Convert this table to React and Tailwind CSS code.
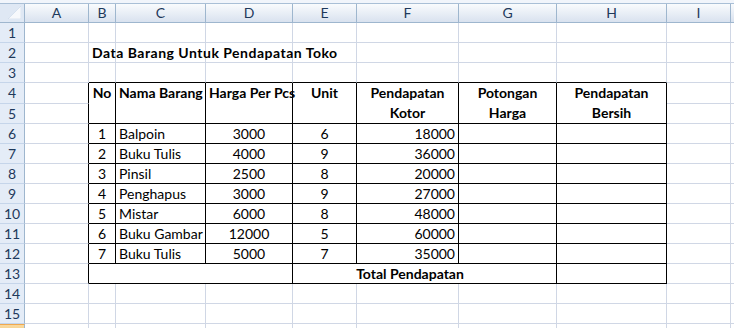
import React from 'react';

const COLS = [
    { k: 'A', w: 'w-[64px]' },
    { k: 'B', w: 'w-[27px]' },
    { k: 'C', w: 'w-[90px]' },
    { k: 'D', w: 'w-[87px]' },
    { k: 'E', w: 'w-[64px]' },
    { k: 'F', w: 'w-[102px]' },
    { k: 'G', w: 'w-[98px]' },
    { k: 'H', w: 'w-[110px]' },
    { k: 'I', w: 'w-[64px]' },
    { k: 'J', w: 'w-[80px]' },
];

const ITEMS = [
    [1, 'Balpoin', 3000, 6, 18000],
    [2, 'Buku Tulis', 4000, 9, 36000],
    [3, 'Pinsil', 2500, 8, 20000],
    [4, 'Penghapus', 3000, 9, 27000],
    [5, 'Mistar', 6000, 8, 48000],
    [6, 'Buku Gambar', 12000, 5, 60000],
    [7, 'Buku Tulis', 5000, 7, 35000],
];

// table block is B4:H13
const inTable = (r, c) => r >= 4 && r <= 13 && c >= 1 && c <= 7;

function Cell({ r, c, children, align = 'left', bold = false, colSpan, rowSpan, top = false, extra = '' }) {
    const blackR = inTable(r, c) || (c === 0 && r >= 4 && r <= 13);
    const blackB = inTable(r, c) || (r === 3 && c >= 1 && c <= 7);
    return (
        <td
            colSpan={colSpan}
            rowSpan={rowSpan}
            className={`border-r border-b p-0 px-[3px] whitespace-nowrap leading-[19px] ${
                blackR ? 'border-r-black' : 'border-r-[#d0d7e5]'
            } ${blackB ? 'border-b-black' : 'border-b-[#d0d7e5]'} ${
                align === 'center' ? 'text-center' : align === 'right' ? 'text-right' : 'text-left'
            } ${bold ? 'font-bold' : ''} ${top ? 'align-top' : 'align-middle'} ${extra}`}
        >
            {children}
        </td>
    );
}

function RowHead({ n, active }) {
    return (
        <td
            className={`border-r border-b p-0 text-center leading-[19px] text-[#1e395b] ${
                active
                    ? 'bg-gradient-to-b from-[#f9d99f] to-[#f1c15f] border-r-[#9eb6ce] border-b-[#9eb6ce] border-t border-t-[#f0a94f]'
                    : 'bg-[#e4ecf7] border-r-[#9eb6ce] border-b-[#c5d5ea]'
            }`}
        >
            {active ? null : n}
        </td>
    );
}

function EmptyRow({ r }) {
    return (
        <tr className="h-[20px]">
            <RowHead n={r} active={r === 16} />
            {COLS.map((col, c) => (
                <Cell key={col.k} r={r} c={c} />
            ))}
        </tr>
    );
}

export default function App() {
    return (
        <div className="w-[734px] h-[328px] overflow-hidden bg-white text-[14px] text-black font-['Lato','Liberation_Sans',sans-serif]">
            <div className="h-[4px] bg-[#f1f5fb] border-b border-[#a9bfd6]" />
            <table className="table-fixed border-separate border-spacing-0 w-[811px]">
                <colgroup>
                    <col className="w-[25px]" />
                    {COLS.map(col => (
                        <col key={col.k} className={col.w} />
                    ))}
                </colgroup>
                <thead>
                    <tr className="h-[19px]">
                        <th className="p-0 border-r border-b border-[#9eb6ce] bg-[#dfe8f4] relative">
                            <svg className="absolute right-[3px] bottom-[3px]" width="13" height="13" viewBox="0 0 13 13">
                                <polygon points="13,0 13,13 0,13" fill="#f7f9fc" stroke="#c3d2e6" strokeWidth="0.5" />
                            </svg>
                        </th>
                        {COLS.map(col => (
                            <th
                                key={col.k}
                                className="p-0 border-r border-b border-[#9eb6ce] bg-gradient-to-b from-[#f9fbfd] to-[#d9e2ef] text-center font-normal leading-[18px] text-[#1e395b]"
                            >
                                {col.k === 'J' ? '' : col.k}
                            </th>
                        ))}
                    </tr>
                </thead>
                <tbody>
                    <EmptyRow r={1} />
                    <tr className="h-[20px]">
                        <RowHead n={2} />
                        <Cell r={2} c={0} />
                        <Cell r={2} c={1} bold extra="tracking-[0.5px]">Data Barang Untuk Pendapatan Toko</Cell>
                        {COLS.slice(2).map((col, i) => (
                            <Cell key={col.k} r={2} c={i + 2} />
                        ))}
                    </tr>
                    <EmptyRow r={3} />

                    {/* header block, rows 4-5 merged */}
                    <tr className="h-[20px]">
                        <RowHead n={4} />
                        <Cell r={4} c={0} />
                        <Cell r={5} c={1} rowSpan={2} align="center" bold top>No</Cell>
                        <Cell r={5} c={2} rowSpan={2} align="center" bold top>Nama Barang</Cell>
                        <Cell r={5} c={3} rowSpan={2} align="center" bold top>Harga Per Pcs</Cell>
                        <Cell r={5} c={4} rowSpan={2} align="center" bold top>Unit</Cell>
                        <Cell r={5} c={5} rowSpan={2} align="center" bold top extra="leading-[20px]">Pendapatan<br />Kotor</Cell>
                        <Cell r={5} c={6} rowSpan={2} align="center" bold top extra="leading-[20px]">Potongan<br />Harga</Cell>
                        <Cell r={5} c={7} rowSpan={2} align="center" bold top extra="leading-[20px]">Pendapatan<br />Bersih</Cell>
                        <Cell r={4} c={8} />
                        <Cell r={4} c={9} />
                    </tr>
                    <tr className="h-[20px]">
                        <RowHead n={5} />
                        <Cell r={5} c={0} />
                        <Cell r={5} c={8} />
                        <Cell r={5} c={9} />
                    </tr>

                    {ITEMS.map(([no, name, harga, unit, kotor], i) => {
                        const r = 6 + i;
                        return (
                            <tr key={r} className="h-[20px]">
                                <RowHead n={r} />
                                <Cell r={r} c={0} />
                                <Cell r={r} c={1} align="center">{no}</Cell>
                                <Cell r={r} c={2}>{name}</Cell>
                                <Cell r={r} c={3} align="center">{harga}</Cell>
                                <Cell r={r} c={4} align="center">{unit}</Cell>
                                <Cell r={r} c={5} align="right">{kotor}</Cell>
                                <Cell r={r} c={6} />
                                <Cell r={r} c={7} />
                                <Cell r={r} c={8} />
                                <Cell r={r} c={9} />
                            </tr>
                        );
                    })}

                    <tr className="h-[20px]">
                        <RowHead n={13} />
                        <Cell r={13} c={0} />
                        <Cell r={13} c={3} colSpan={3} />
                        <Cell r={13} c={6} colSpan={3} align="center" bold extra="pr-[32px]">Total Pendapatan</Cell>
                        <Cell r={13} c={7} />
                        <Cell r={13} c={8} />
                        <Cell r={13} c={9} />
                    </tr>
                    <EmptyRow r={14} />
                    <EmptyRow r={15} />
                    <EmptyRow r={16} />
                </tbody>
            </table>
        </div>
    );
}
